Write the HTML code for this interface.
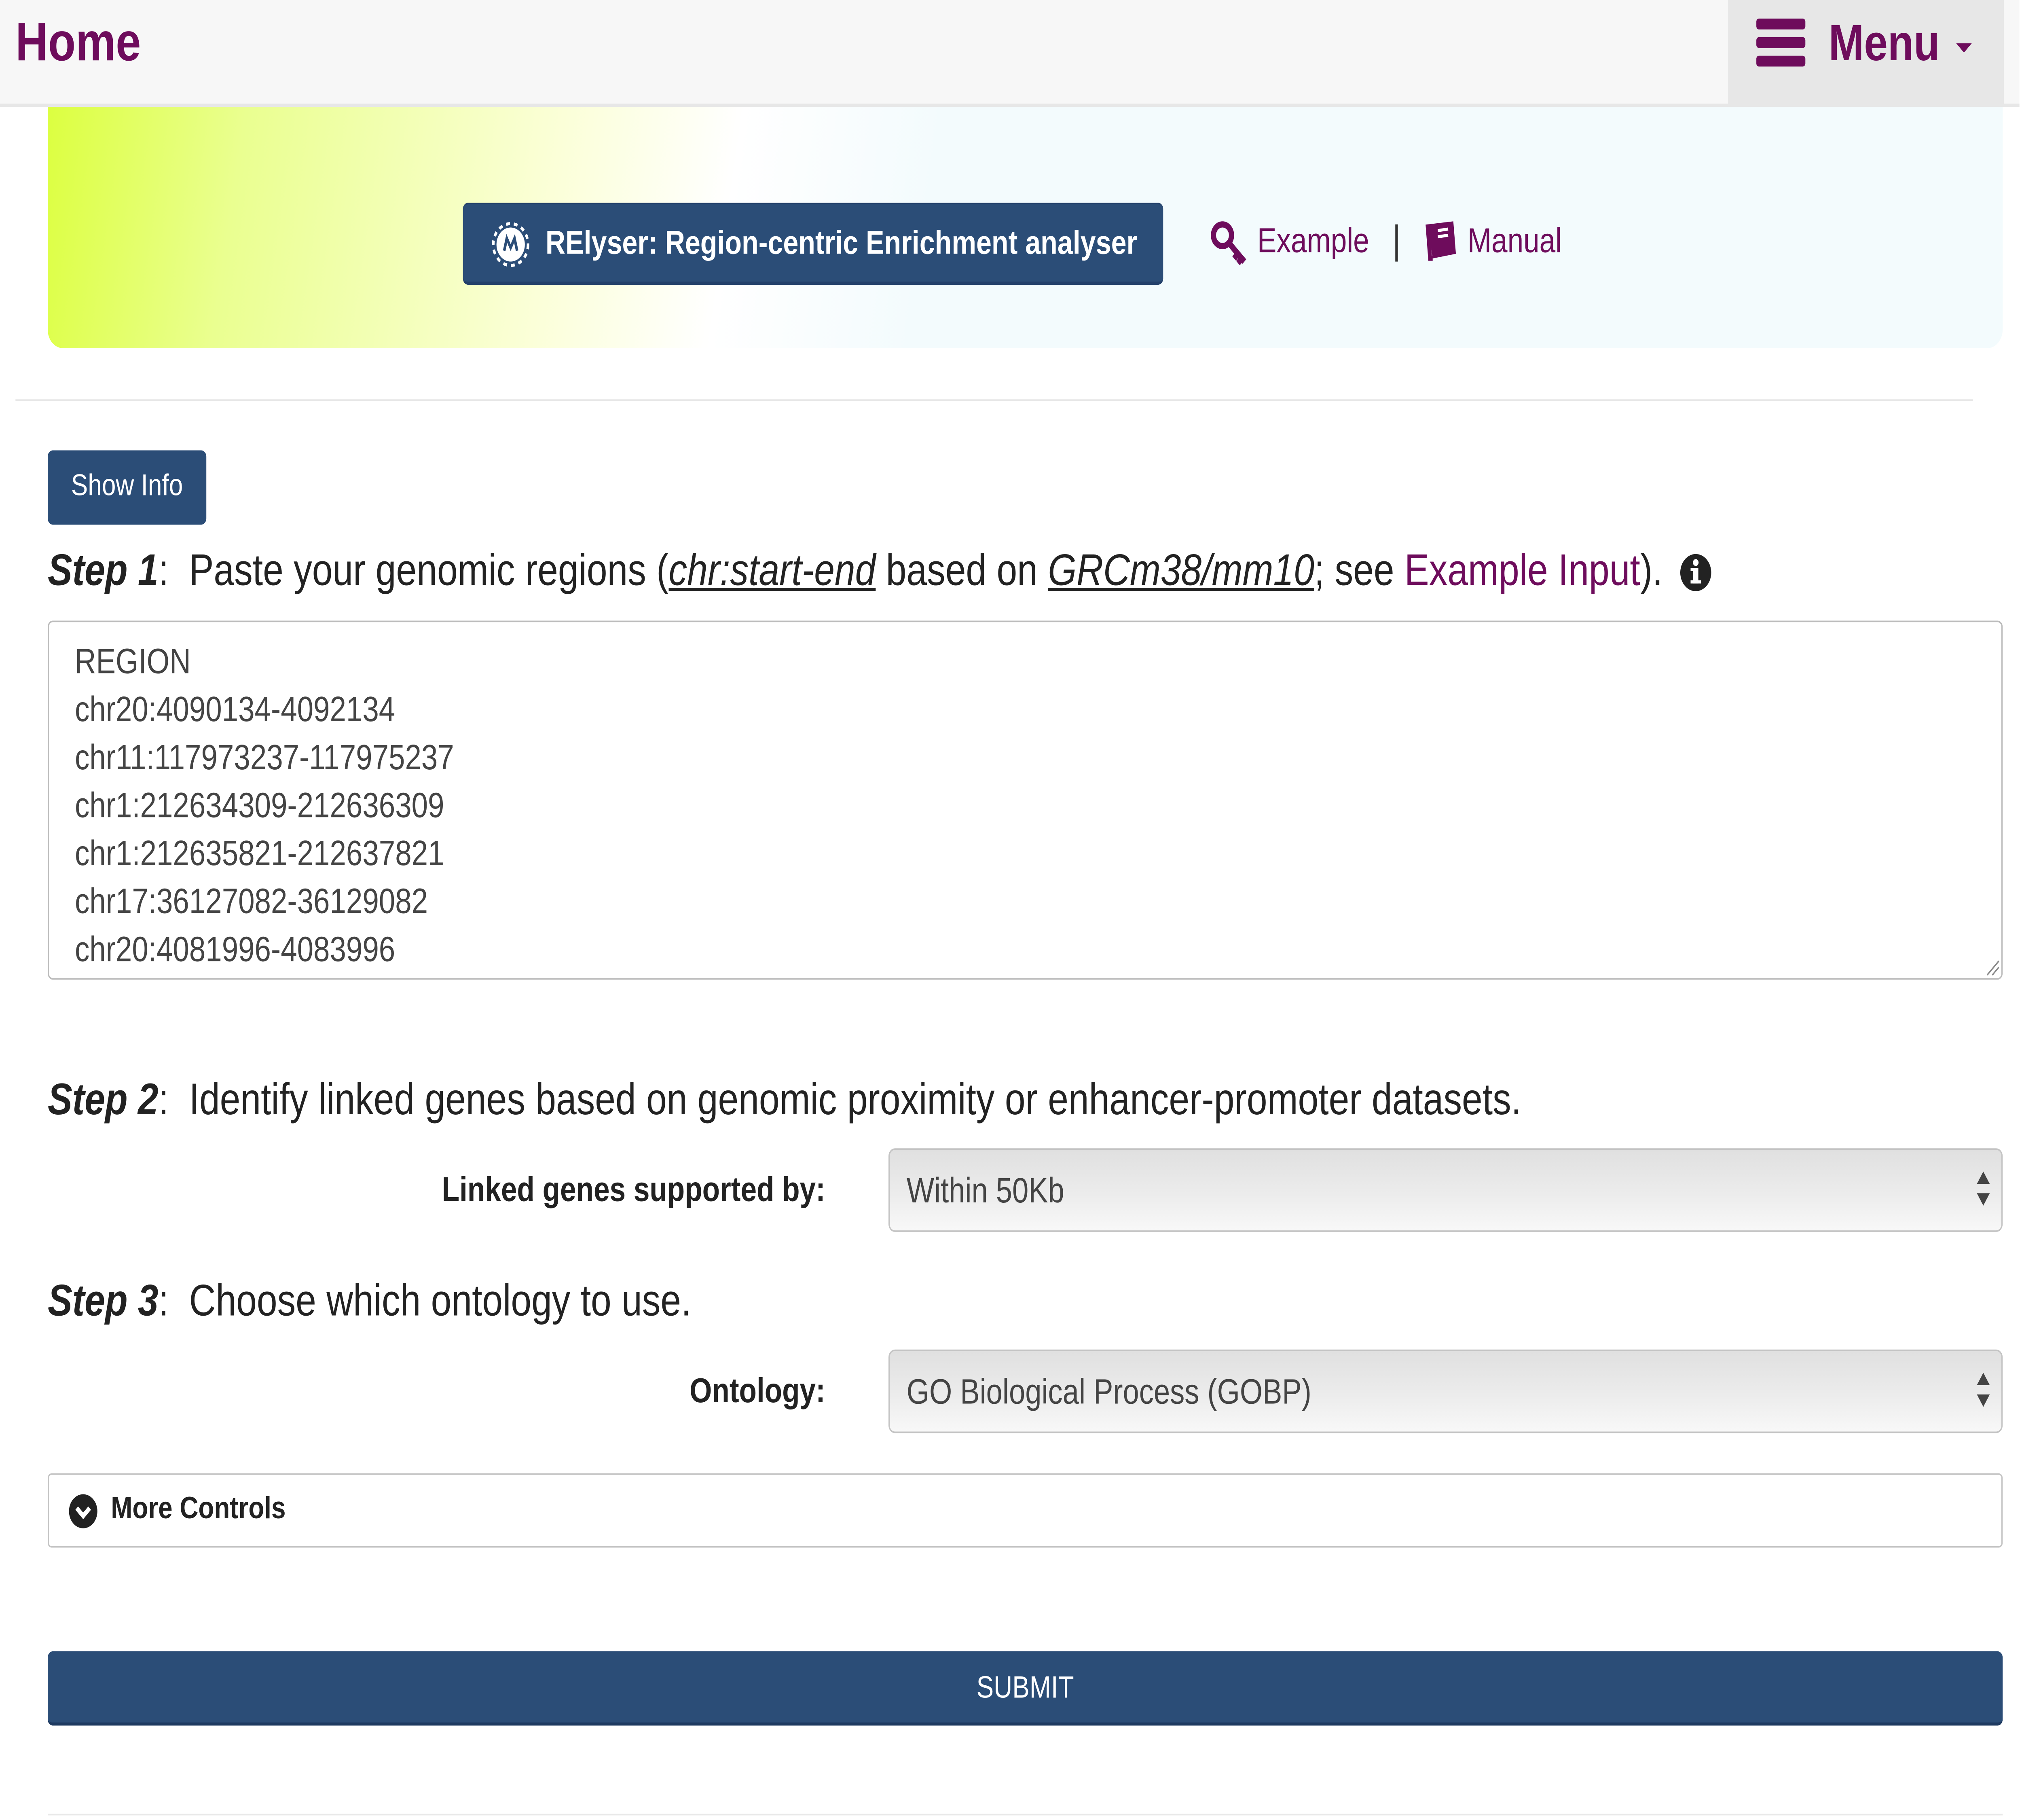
<!DOCTYPE html>
<html><head><meta charset="utf-8"><style>
html,body{margin:0;padding:0;background:#fff;width:100%;height:100%;overflow:hidden}
#w{position:absolute;left:0;top:0;width:1568px;height:1176px;overflow:hidden;transform:scale(3.8265);transform-origin:0 0;font-family:"Liberation Sans",sans-serif;color:#333}
.a{position:absolute}
.p{color:#6e0c5c}
.sel{position:absolute;left:689px;width:864px;height:54px;border:1px solid #c4c4c4;border-radius:5px;background:linear-gradient(#e0e0e0,#ececec 55%,#f8f8f8);font-size:22.7px;line-height:52px;box-sizing:border-box;padding-left:13px;color:#444}
.arr{position:absolute;right:9px;top:14px;width:0;height:0}
.lbl{position:absolute;right:928px;font-size:22.3px;font-weight:bold;color:#222}
.step{position:absolute;left:37px;font-size:28.6px;color:#222;white-space:nowrap}
</style></head><body><div id="w">
<div class="a" style="left:0;top:0;width:1566px;height:67px;background:#f7f7f7;border-bottom:2px solid #e7e7e7"></div>
<div class="a p" style="left:12px;top:8px;font-size:35px;font-weight:bold">Home</div>
<div class="a" style="left:1340px;top:0;width:214px;height:67px;background:#e7e7e7"></div>
<div class="a" style="left:1362px;top:12px;width:38px;height:7px;background:#6e0c5c;border-radius:2px"></div>
<div class="a" style="left:1362px;top:24px;width:38px;height:7px;background:#6e0c5c;border-radius:2px"></div>
<div class="a" style="left:1362px;top:36px;width:38px;height:7px;background:#6e0c5c;border-radius:2px"></div>
<div class="a p" style="left:1418px;top:9px;font-size:33px;font-weight:bold">Menu</div>
<div class="a" style="left:1517px;top:28px;border-left:6px solid transparent;border-right:6px solid transparent;border-top:6px solid #6e0c5c"></div>

<div class="a" style="left:37px;top:69px;width:1516px;height:156px;border-radius:0 0 12px 12px;background:linear-gradient(100deg,#dcff40 0%,#eaff90 10%,#fbffd8 26%,#ffffff 35%,#f3fbfd 45%,#f3fbfd 100%)"></div>
<div class="a" style="left:359px;top:131px;width:543px;height:53px;background:#2b4d77;border-radius:4px;border-top:1px solid #23406a;border-bottom:2px solid #23406a;box-sizing:border-box"></div>
<svg class="a" style="left:381px;top:143px" width="30" height="30" viewBox="0 0 30 30"><circle cx="15" cy="15" r="11" fill="#fff"/><circle cx="15" cy="15" r="13.5" fill="none" stroke="#fff" stroke-width="2" stroke-dasharray="3 3"/><path d="M10 19 L12 11 L15 17 L18 11 L20 19" stroke="#2b4d77" stroke-width="2" fill="none"/></svg>
<div class="a" style="left:423px;top:145px;font-size:21.4px;font-weight:bold;color:#fff;white-space:nowrap">RElyser: Region-centric Enrichment analyser</div>
<svg class="a" style="left:938px;top:142px" width="30" height="30" viewBox="0 0 30 30"><circle cx="10" cy="10" r="7" fill="none" stroke="#6e0c5c" stroke-width="4"/><path d="M14 14 L27 27 M22 22 L19 25 M25 25 L22 28" stroke="#6e0c5c" stroke-width="4" fill="none"/></svg>
<div class="a p" style="left:975px;top:143px;font-size:22.3px">Example</div>
<div class="a" style="left:1082px;top:145px;width:2px;height:24px;background:#333"></div>
<svg class="a" style="left:1103px;top:142px" width="30" height="28" viewBox="0 0 30 28"><path d="M4 3 L24 1 L26 22 L8 25 Z" fill="#6e0c5c"/><path d="M4 3 L6 25 L8 25" stroke="#6e0c5c" stroke-width="3" fill="none"/><path d="M12 7 L20 6 M12 11 L20 10" stroke="#fff" stroke-width="2"/></svg>
<div class="a p" style="left:1138px;top:143px;font-size:22.3px">Manual</div>

<div class="a" style="left:12px;top:258px;width:1518px;height:1px;background:#e8e8e8"></div>
<div class="a" style="left:37px;top:291px;width:123px;height:48px;background:#2b4d77;border-radius:4px;color:#fff;font-size:19.5px;line-height:47px;text-align:center">Show Info</div>

<div class="step" style="top:353px"><b><i>Step 1</i></b>:&nbsp; Paste your genomic regions (<i><u>chr:start-end</u></i> based on <i><u>GRCm38/mm10</u></i>; see <span class="p">Example Input</span>).</div>
<svg class="a" style="left:1302px;top:357px" width="26" height="26" viewBox="0 0 26 26"><circle cx="13" cy="13" r="12" fill="#222"/><rect x="11" y="10" width="4" height="10" fill="#fff"/><rect x="9" y="10" width="4" height="2" fill="#fff"/><rect x="9" y="18" width="8" height="2" fill="#fff"/><circle cx="13" cy="6.5" r="2.2" fill="#fff"/></svg>

<div class="a" style="left:37px;top:401px;width:1516px;height:232px;border:1px solid #bcbcbc;border-radius:4px;box-sizing:border-box"></div>
<div class="a" style="left:58px;top:412px;font-size:22.8px;line-height:31px;color:#444;white-space:nowrap">REGION<br>chr20:4090134-4092134<br>chr11:117973237-117975237<br>chr1:212634309-212636309<br>chr1:212635821-212637821<br>chr17:36127082-36129082<br>chr20:4081996-4083996</div>
<svg class="a" style="left:1540px;top:620px" width="11" height="11"><path d="M1 10 L10 1 M5 10 L10 5" stroke="#888"/></svg>

<div class="step" style="top:695px"><b><i>Step 2</i></b>:&nbsp; Identify linked genes based on genomic proximity or enhancer-promoter datasets.</div>
<div class="lbl" style="top:756px">Linked genes supported by:</div>
<div class="sel" style="top:742px">Within 50Kb<div class="arr" style="border-left:5px solid transparent;border-right:5px solid transparent;border-bottom:8px solid #444"></div><div class="arr" style="top:28px;border-left:5px solid transparent;border-right:5px solid transparent;border-top:8px solid #444"></div></div>

<div class="step" style="top:825px"><b><i>Step 3</i></b>:&nbsp; Choose which ontology to use.</div>
<div class="lbl" style="top:886px">Ontology:</div>
<div class="sel" style="top:872px">GO Biological Process (GOBP)<div class="arr" style="border-left:5px solid transparent;border-right:5px solid transparent;border-bottom:8px solid #444"></div><div class="arr" style="top:28px;border-left:5px solid transparent;border-right:5px solid transparent;border-top:8px solid #444"></div></div>

<div class="a" style="left:37px;top:952px;width:1516px;height:48px;border:1px solid #c4c4c4;border-radius:3px;box-sizing:border-box"></div>
<svg class="a" style="left:53px;top:965px" width="23" height="23" viewBox="0 0 23 23"><circle cx="11.5" cy="11.5" r="11" fill="#222"/><path d="M6.5 9.5 L11.5 14.5 L16.5 9.5" stroke="#fff" stroke-width="3" fill="none"/></svg>
<div class="a" style="left:86px;top:964px;font-size:20px;font-weight:bold;color:#222">More Controls</div>

<div class="a" style="left:37px;top:1067px;width:1516px;height:48px;background:#2b4d77;border-radius:4px;color:#fff;font-size:20px;line-height:48px;text-align:center;border-bottom:2px solid #1e3a60;box-sizing:border-box">SUBMIT</div>
<div class="a" style="left:37px;top:1172px;width:1516px;height:1px;background:#e8e8e8"></div>
</div>
<script>
(function(){var w=document.getElementById('w');function f(){var sx=window.innerWidth/1568,sy=window.innerHeight/1176;if(sx>0&&sy>0)w.style.transform='scale('+sx+','+sy+')';}f();window.addEventListener('resize',f);})();
</script>
</body></html>
